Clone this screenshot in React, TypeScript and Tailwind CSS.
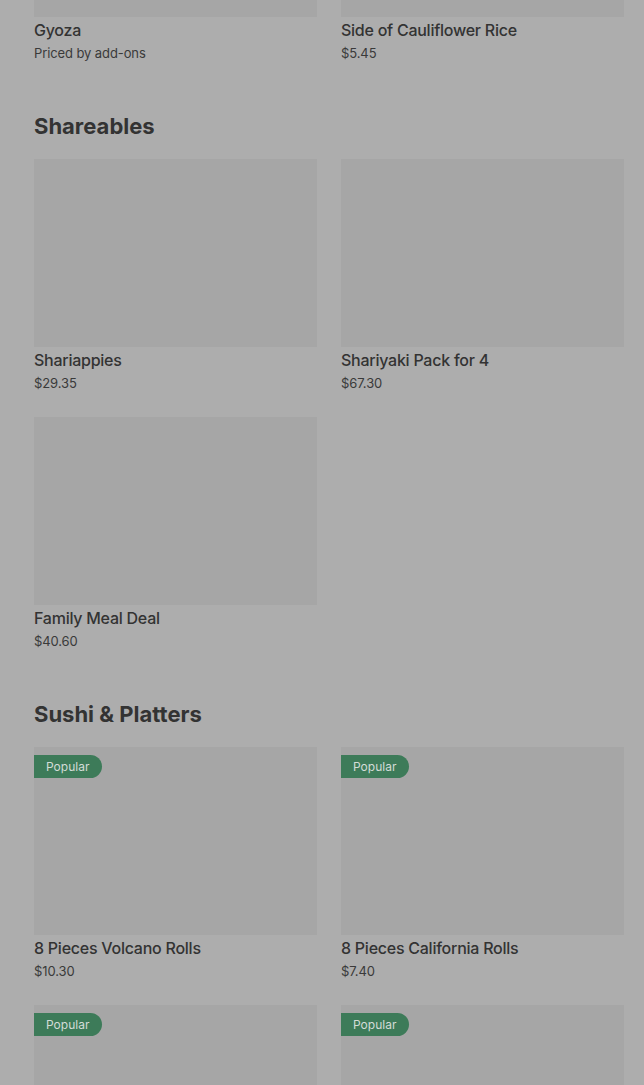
type Item = { name: string; price: string; popular?: boolean };

const sections: { title?: string; items: Item[] }[] = [
  {
    items: [
      { name: "Gyoza", price: "Priced by add-ons" },
      { name: "Side of Cauliflower Rice", price: "$5.45" },
    ],
  },
  {
    title: "Shareables",
    items: [
      { name: "Shariappies", price: "$29.35" },
      { name: "Shariyaki Pack for 4", price: "$67.30" },
      { name: "Family Meal Deal", price: "$40.60" },
    ],
  },
  {
    title: "Sushi & Platters",
    items: [
      { name: "8 Pieces Volcano Rolls", price: "$10.30", popular: true },
      { name: "8 Pieces California Rolls", price: "$7.40", popular: true },
      { name: "Sushi Platter", price: "$24.95", popular: true },
      { name: "Rainbow Rolls", price: "$12.80", popular: true },
    ],
  },
];

function ItemCard({ item }: { item: Item }) {
  return (
    <div className="flex flex-col">
      <div className="relative h-[188px] bg-[#a6a6a6]">
        {item.popular && (
          <span className="absolute left-0 top-[8px] flex h-[23px] items-center rounded-r-full bg-[#3d7b59] pl-[12px] pr-[13px] text-[12px] text-[#d3dcd7]">
            Popular
          </span>
        )}
      </div>
      <div className="mt-[2px] text-[16px] leading-[22px] font-medium tracking-[-0.25px] text-[#333333]">
        {item.name}
      </div>
      <div className="mt-[2px] text-[13px] leading-[20px] tracking-[-0.1px] text-[#3a3a3a]">
        {item.price}
      </div>
    </div>
  );
}

export default function App() {
  return (
    <div
      className="h-screen overflow-hidden bg-[#adadad]"
      style={{ fontFamily: "Inter, 'Noto Sans', sans-serif" }}
    >
      <div className="-mt-[171px] pl-[34px] pr-[20px]">
        {sections.map((s, i) => (
          <section key={i} className={i > 0 ? "mt-[47px]" : ""}>
            {s.title && (
              <h2 className="mb-[17px] text-[22px] leading-[32px] font-bold text-[#333333]">
                {s.title}
              </h2>
            )}
            <div className="grid grid-cols-2 gap-x-[24px] gap-y-[24px]">
              {s.items.map((it) => (
                <ItemCard key={it.name} item={it} />
              ))}
            </div>
          </section>
        ))}
      </div>
    </div>
  );
}
